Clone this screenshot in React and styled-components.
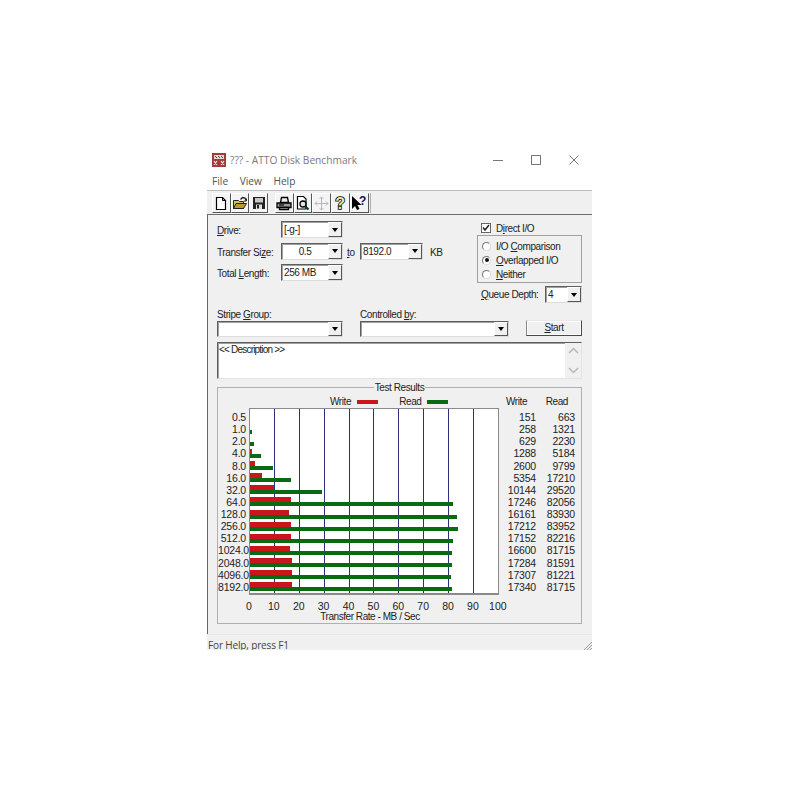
import React from 'react';
import styled, { createGlobalStyle } from 'styled-components';

const GlobalStyle = createGlobalStyle`
	html, body {
		margin: 0;
		padding: 0;
		background: #fff;
	}
	body {
		font-family: "Liberation Sans", Arial, sans-serif;
		font-size: 10px;
		letter-spacing: -0.4px;
		color: #222;
		white-space: nowrap;
	}
`

const Window = styled.div`
	width: 385px;
	margin: 150px 0 0 207px;
`

const TitleBar = styled.div`
	height: 22px;
	box-sizing: border-box;
	padding: 0 0 2px 5px;
	display: flex;
	align-items: center;
	font-family: "Open Sans", sans-serif;
	font-size: 10.2px;
	letter-spacing: 0;
	color: #7a7a7a;
`

const TitleText = styled.span`
	margin-left: 4px;
	flex: 1;
`

const WinControls = styled.div`
	display: flex;
	align-items: center;
	gap: 28px;
	padding-right: 13px;
`

const MenuBar = styled.div`
	height: 18px;
	display: flex;
	align-items: center;
	gap: 11.5px;
	padding-left: 5px;
	font-family: "Open Sans", sans-serif;
	font-size: 10.2px;
	letter-spacing: 0;
	color: #555;
`

const ToolArea = styled.div`
	height: 25px;
	box-sizing: border-box;
	background: #f0f0f0;
	border-top: 1px solid #bdbdbd;
	border-bottom: 1px solid #6c6c6c;
	padding: 1px 0 0 5px;
	display: flex;
`

const ToolGroup = styled.div`
	display: flex;
	height: 20px;
	padding-right: 1px;
	border-right: 1px solid #b0b0b0;
	margin-top: 1px;
`

const ToolButton = styled.div`
	width: 18.7px;
	height: 20px;
	box-sizing: border-box;
	display: flex;
	align-items: center;
	justify-content: center;
	background: #f4f4f4;
	border: 1px solid;
	border-color: #fff #555 #555 #fff;
	margin-left: ${p => (p.$gap ? '7px' : '0')};
`

const Body = styled.div`
	background: #f0f0f0;
	border-left: 1px solid #666;
	padding: 6px 10px 10px 9px;
`

const TopSection = styled.div`
	display: flex;
	height: 83px;
`

const LeftForm = styled.div`
	width: 260px;
	display: flex;
	flex-direction: column;
	gap: 4.5px;
`

const FormRow = styled.div`
	display: flex;
	align-items: center;
	height: 17px;
`

const FieldLabel = styled.span`
	width: 64px;
	flex: none;
	padding-top: 2px;
`

const Combo = styled.div`
	width: ${p => p.$w}px;
	height: ${p => p.$h || 17}px;
	box-sizing: border-box;
	flex: none;
	display: flex;
	background: #fff;
	border: 1px solid;
	border-color: #5e5e5e #dcdcdc #dcdcdc #5e5e5e;
	box-shadow: inset 1px 1px 0 #a0a0a0;
`

const ComboValue = styled.span`
	flex: 1;
	padding: 1px 2px 0;
	line-height: 14px;
	text-align: ${p => (p.$center ? 'center' : 'left')};
`

const ComboArrow = styled.span`
	width: 14px;
	flex: none;
	display: flex;
	align-items: center;
	justify-content: center;
	background: #f0f0f0;
	box-sizing: border-box;
	border: 1px solid;
	border-color: #fff #555 #555 #fff;
	&::after {
		content: "";
		border: 3.5px solid transparent;
		border-top: 4px solid #000;
		border-bottom: 0;
	}
`

const ToText = styled.span`
	margin: 0 5px 0 4px;
	width: 8px;
	padding-top: 2px;
`

const KbText = styled.span`
	margin-left: 7px;
	padding-top: 2px;
`

const RightOptions = styled.div`
	width: 105px;
	display: flex;
	flex-direction: column;
`

const CheckRow = styled.div`
	height: 14px;
	display: flex;
	align-items: center;
	gap: 5px;
	padding-left: 4px;
`

const CheckBox = styled.span`
	width: 10px;
	height: 10px;
	flex: none;
	box-sizing: border-box;
	background: #fff;
	border: 1px solid #666;
	display: flex;
`

const RadioGroup = styled.div`
	height: 48px;
	box-sizing: border-box;
	border: 1px solid #a0a0a0;
	padding: 3px 0 0 4px;
	display: flex;
	flex-direction: column;
`

const RadioRow = styled.div`
	height: 14.4px;
	display: flex;
	align-items: center;
	gap: 5px;
`

const Radio = styled.span`
	width: 9px;
	height: 9px;
	flex: none;
	box-sizing: border-box;
	border-radius: 50%;
	background: #fff;
	border: 1px solid;
	border-color: #777 #ddd #ddd #777;
	display: flex;
	align-items: center;
	justify-content: center;
	&::after {
		content: "";
		width: 4px;
		height: 4px;
		border-radius: 50%;
		background: ${p => (p.$on ? '#111' : 'transparent')};
	}
`

const QueueRow = styled.div`
	margin-top: 3px;
	height: 17px;
	display: flex;
	align-items: center;
	justify-content: space-between;
	padding-left: 4px;
`

const Key = styled.span`
	text-decoration: underline;
	text-underline-offset: 1px;
`

const StripeSection = styled.div`
	display: flex;
	gap: 17px;
	margin-top: 4px;
	align-items: flex-end;
`

const StripeField = styled.div`
	display: flex;
	flex-direction: column;
`

const StripeLabel = styled.span`
	height: 13px;
	line-height: 13px;
`

const StartButton = styled.div`
	width: 56px;
	height: 16px;
	box-sizing: border-box;
	background: #f0f0f0;
	border: 1px solid;
	border-color: #e8e8e8 #4a4a4a #4a4a4a #8a8a8a;
	box-shadow: inset 0 0 0 1px #fff;
	text-align: center;
	line-height: 14px;
	margin-bottom: 1px;
`

const Description = styled.div`
	margin-top: 5px;
	height: 37px;
	box-sizing: border-box;
	display: flex;
	background: #fff;
	border: 1px solid;
	border-color: #5e5e5e #e4e4e4 #e4e4e4 #5e5e5e;
	box-shadow: inset 1px 1px 0 #a0a0a0;
`

const DescText = styled.span`
	flex: 1;
	padding: 1px 0 0 1px;
	letter-spacing: -0.8px;
`

const ScrollBar = styled.div`
	width: 16px;
	background: #f0f0f0;
	display: flex;
	flex-direction: column;
	justify-content: space-between;
	align-items: center;
	padding: 4px 0;
`

const ResultsBox = styled.fieldset`
	margin: 2px 0 0;
	padding: 0;
	height: 243px;
	box-sizing: border-box;
	border: 1px solid #b0b0b0;
	min-width: 0;
`

const ResultsTitle = styled.legend`
	margin: 0 auto;
	padding: 0 1px;
	line-height: 13px;
`

const LegendRow = styled.div`
	height: 14px;
	padding-top: 1px;
	display: flex;
	align-items: center;
	line-height: 14px;
`

const LegendKeys = styled.div`
	display: flex;
	align-items: center;
	width: 288px;
	padding-left: 112px;
	box-sizing: border-box;
`

const Swatch = styled.span`
	width: 21px;
	height: 4px;
	background: ${p => p.$color};
	margin: 0 21px 0 6px;
`

const ValueHead = styled.span`
	width: ${p => p.$w}px;
	text-align: right;
`

const ChartRow = styled.div`
	display: flex;
`

const NumberColumn = styled.div`
	font-size: 10.5px;
	letter-spacing: -0.2px;
	flex: none;
	padding-top: 2px;
	text-align: right;
	width: ${p => p.$w}px;
`

const Cell = styled.div`
	height: 12.14px;
	line-height: 12.14px;
`

const Plot = styled.div`
	width: 248px;
	height: 182px;
	flex: none;
	margin-left: 3px;
	box-sizing: content-box;
	padding-top: 2px;
	background-color: #fff;
	background-image: repeating-linear-gradient(
		to right,
		transparent 0,
		transparent 23.9px,
		#2f2f7f 23.9px,
		#2f2f7f 24.9px
	);
	background-clip: padding-box;
	border: 1px solid #8a8a8a;
	border-bottom-width: 2px;
	margin-top: -1px;
`

const BarRow = styled.div`
	height: 12.14px;
	display: flex;
	flex-direction: column;
	justify-content: center;
`

const Bar = styled.div`
	height: ${p => p.$h}px;
	background: ${p => p.$color};
`

const XAxis = styled.div`
	display: flex;
	margin: 6px 0 0 18.5px;
	font-size: 10.5px;
	letter-spacing: 0;
`

const XTick = styled.span`
	width: 24.9px;
	text-align: center;
	line-height: 11px;
`

const XCaption = styled.div`
	line-height: 10px;
	width: 304px;
	text-align: center;
	letter-spacing: -0.45px;
`

const StatusBar = styled.div`
	height: 16px;
	box-sizing: border-box;
	display: flex;
	align-items: flex-end;
	justify-content: space-between;
	padding: 0 0 0 1px;
	background: #f0f0f0;
	border-top: 1px solid #e6e6e6;
	font-family: "Open Sans", sans-serif;
	font-size: 10px;
	letter-spacing: -0.15px;
	line-height: 10px;
	color: #444;
`

const results = [
	['0.5', 151, 663],
	['1.0', 258, 1321],
	['2.0', 629, 2230],
	['4.0', 1288, 5184],
	['8.0', 2600, 9799],
	['16.0', 5354, 17210],
	['32.0', 10144, 29520],
	['64.0', 17246, 82056],
	['128.0', 16161, 83930],
	['256.0', 17212, 83952],
	['512.0', 17152, 82216],
	['1024.0', 16600, 81715],
	['2048.0', 17284, 81591],
	['4096.0', 17307, 81221],
	['8192.0', 17340, 81715],
];

const ticks = [0, 10, 20, 30, 40, 50, 60, 70, 80, 90, 100];

// kB/s to px, 10 MB/s is one grid cell
const barWidth = value => Math.max(0, Math.floor(value * 0.00249 - 1));

const AppIcon = () => (
	<svg width="14" height="14" viewBox="0 0 14 14">
		<rect width="14" height="14" fill="#a33a3a" />
		<rect x="2" y="2" width="10" height="4" fill="#e8d8d8" />
		<path d="M3 3h1v1H3zM6 3h1v1H6zM9 3h1v1H9zM4 4h1v1H4zM7 4h1v1H7zM10 4h1v1h-1z" fill="#444" />
		<path d="M2 8l3 4M5 8l-3 4M9 8l3 4M12 8l-3 4" stroke="#eee" strokeWidth="1.2" />
	</svg>
);

const IconNew = () => (
	<svg width="14" height="15" viewBox="0 0 14 15">
		<path d="M2.500 1.500h6l3 3v9h-9z" fill="#fff" stroke="#000" strokeWidth="1.200" />
		<path d="M8.500 1.500v3h3" fill="none" stroke="#000" />
	</svg>
);

const IconOpen = () => (
	<svg width="16" height="15" viewBox="0 0 16 15">
		<path d="M1.500 4.500h5l1 1h4v7h-10z" fill="#d8c25a" stroke="#222" />
		<path d="M1.500 12.500l2.500-5h10.500l-3 5z" fill="#b89a34" stroke="#222" />
		<path d="M8.500 3.500l2-2 2.500.5 1 2.500" fill="none" stroke="#222" strokeWidth="1.300" />
		<path d="M14.500 2.500v2.500h-2.500" fill="none" stroke="#222" />
	</svg>
);

const IconSave = () => (
	<svg width="14" height="14" viewBox="0 0 14 14">
		<rect x="1" y="1" width="12" height="12" fill="#222" />
		<rect x="3" y="2" width="8" height="4.500" fill="#c8c8c8" />
		<rect x="4" y="8.500" width="6" height="4.500" fill="#e0e0e0" />
		<rect x="5" y="9" width="2" height="3.500" fill="#222" />
	</svg>
);

const IconPrint = () => (
	<svg width="16" height="15" viewBox="0 0 16 15">
		<path d="M4.500 6.500l1-5h6l1 5z" fill="#eee" stroke="#000" strokeWidth="1.300" />
		<path d="M1 7h14v4.500H1z" fill="#9a9a9a" stroke="#000" strokeWidth="1.300" />
		<path d="M3.500 11.500h9v2h-9z" fill="#eee" stroke="#000" strokeWidth="1.300" />
		<path d="M3 9h5" stroke="#111" strokeWidth="1.300" />
	</svg>
);

const IconPreview = () => (
	<svg width="16" height="16" viewBox="0 0 16 16">
		<path d="M2.500 1.500h6l2.500 2.500v10h-8.500z" fill="#fff" stroke="#000" strokeWidth="1.200" />
		<circle cx="8" cy="9" r="3" fill="#dfe8e8" stroke="#000" strokeWidth="1.300" />
		<path d="M10 11l3.500 3.500" stroke="#063030" strokeWidth="2" />
	</svg>
);

const IconMove = () => (
	<svg width="15" height="15" viewBox="0 0 15 15">
		<path
			d="M7.500 1v13M1 7.500h13M5.500 3l2-2 2 2M5.500 12l2 2 2-2M3 5.500l-2 2 2 2M12 5.500l2 2-2 2"
			fill="none"
			stroke="#b8b8b8"
		/>
	</svg>
);

const IconHelp = () => (
	<svg width="12" height="16" viewBox="0 0 12 16">
		<text
			x="6"
			y="13.500"
			textAnchor="middle"
			fontFamily="Liberation Sans, sans-serif"
			fontWeight="700"
			fontSize="16"
			fill="#f0e6a0"
			stroke="#000"
			strokeWidth="1.600"
			paintOrder="stroke"
		>
			?
		</text>
	</svg>
);

const IconWhatsThis = () => (
	<svg width="16" height="16" viewBox="0 0 16 16">
		<path d="M1 1l0 13 3-3 2 4 2.500-1-2-4h4z" fill="#000" />
		<text
			x="11.500"
			y="10"
			textAnchor="middle"
			fontFamily="Liberation Sans, sans-serif"
			fontWeight="700"
			fontSize="12"
			fill="#12125a"
		>
			?
		</text>
	</svg>
);

const Chevron = ({ up }) => (
	<svg width="11" height="7" viewBox="0 0 11 7">
		<path d={up ? 'M1 6l4.500-4.500L10 6' : 'M1 1l4.500 4.500L10 1'} fill="none" stroke="#b8b8b8" strokeWidth="1.500" />
	</svg>
);

const App = () => {
	return (
		<>
			<GlobalStyle />
			<Window>
				<TitleBar>
					<AppIcon />
					<TitleText>??? - ATTO Disk Benchmark</TitleText>
					<WinControls>
						<svg width="10" height="10" viewBox="0 0 10 10">
							<path d="M0 5.500h10" stroke="#777" />
						</svg>
						<svg width="10" height="10" viewBox="0 0 10 10">
							<rect x=".5" y=".5" width="9" height="9" fill="none" stroke="#777" />
						</svg>
						<svg width="10" height="10" viewBox="0 0 10 10">
							<path d="M.5 .5l9 9M9.500 .5l-9 9" stroke="#777" />
						</svg>
					</WinControls>
				</TitleBar>
				<MenuBar>
					<span>File</span>
					<span>View</span>
					<span>Help</span>
				</MenuBar>
				<ToolArea>
					<ToolGroup>
						<ToolButton><IconNew /></ToolButton>
						<ToolButton><IconOpen /></ToolButton>
						<ToolButton><IconSave /></ToolButton>
						<ToolButton $gap><IconPrint /></ToolButton>
						<ToolButton><IconPreview /></ToolButton>
						<ToolButton><IconMove /></ToolButton>
						<ToolButton><IconHelp /></ToolButton>
						<ToolButton><IconWhatsThis /></ToolButton>
					</ToolGroup>
				</ToolArea>
				<Body>
					<TopSection>
						<LeftForm>
							<FormRow>
								<FieldLabel><Key>D</Key>rive:</FieldLabel>
								<Combo $w={62}>
									<ComboValue>[-g-]</ComboValue>
									<ComboArrow />
								</Combo>
							</FormRow>
							<FormRow>
								<FieldLabel>Transfer Si<Key>z</Key>e:</FieldLabel>
								<Combo $w={62}>
									<ComboValue $center>0.5</ComboValue>
									<ComboArrow />
								</Combo>
								<ToText><Key>t</Key>o</ToText>
								<Combo $w={63}>
									<ComboValue>8192.0</ComboValue>
									<ComboArrow />
								</Combo>
								<KbText>KB</KbText>
							</FormRow>
							<FormRow>
								<FieldLabel>Total <Key>L</Key>ength:</FieldLabel>
								<Combo $w={62}>
									<ComboValue>256 MB</ComboValue>
									<ComboArrow />
								</Combo>
							</FormRow>
						</LeftForm>
						<RightOptions>
							<CheckRow>
								<CheckBox>
									<svg width="8" height="8" viewBox="0 0 8 8">
										<path d="M1 3.500l2 2.500 4-5" fill="none" stroke="#222" strokeWidth="1.500" />
									</svg>
								</CheckBox>
								<span>D<Key>i</Key>rect I/O</span>
							</CheckRow>
							<RadioGroup>
								<RadioRow>
									<Radio />
									<span>I/O <Key>C</Key>omparison</span>
								</RadioRow>
								<RadioRow>
									<Radio $on />
									<span><Key>O</Key>verlapped I/O</span>
								</RadioRow>
								<RadioRow>
									<Radio />
									<span><Key>N</Key>either</span>
								</RadioRow>
							</RadioGroup>
							<QueueRow>
								<span><Key>Q</Key>ueue Depth:</span>
								<Combo $w={37}>
									<ComboValue>4</ComboValue>
									<ComboArrow />
								</Combo>
							</QueueRow>
						</RightOptions>
					</TopSection>
					<StripeSection>
						<StripeField>
							<StripeLabel>Stripe <Key>G</Key>roup:</StripeLabel>
							<Combo $w={126} $h={16}>
								<ComboValue />
								<ComboArrow />
							</Combo>
						</StripeField>
						<StripeField>
							<StripeLabel>Controlled <Key>b</Key>y:</StripeLabel>
							<Combo $w={149} $h={16}>
								<ComboValue />
								<ComboArrow />
							</Combo>
						</StripeField>
						<StartButton><Key>S</Key>tart</StartButton>
					</StripeSection>
					<Description>
						<DescText>&lt;&lt; Description &gt;&gt;</DescText>
						<ScrollBar>
							<Chevron up />
							<Chevron />
						</ScrollBar>
					</Description>
					<ResultsBox>
						<ResultsTitle>Test Results</ResultsTitle>
						<LegendRow>
							<LegendKeys>
								<span>Write</span>
								<Swatch $color="#c8161a" />
								<span>Read</span>
								<Swatch $color="#0a6a14" />
							</LegendKeys>
							<ValueHead $w={21}>Write</ValueHead>
							<ValueHead $w={41}>Read</ValueHead>
						</LegendRow>
						<ChartRow>
							<NumberColumn $w={28}>
								{results.map(([size]) => <Cell key={size}>{size}</Cell>)}
							</NumberColumn>
							<Plot>
								{results.map(([size, write, read]) => (
									<BarRow key={size}>
										<Bar $h={5} $color="#c8161a" style={{ width: barWidth(write) }} />
										<Bar $h={4} $color="#0a6a14" style={{ width: barWidth(read) }} />
									</BarRow>
								))}
							</Plot>
							<NumberColumn $w={37}>
								{results.map(([size, write]) => <Cell key={size}>{write}</Cell>)}
							</NumberColumn>
							<NumberColumn $w={39}>
								{results.map(([size, , read]) => <Cell key={size}>{read}</Cell>)}
							</NumberColumn>
						</ChartRow>
						<XAxis>
							{ticks.map(t => <XTick key={t}>{t}</XTick>)}
						</XAxis>
						<XCaption>Transfer Rate - MB / Sec</XCaption>
					</ResultsBox>
				</Body>
				<StatusBar>
					<span>For Help, press F1</span>
					<svg width="9" height="9" viewBox="0 0 9 9">
						<path d="M1 9l8-8M4 9l5-5M7 9l2-2" stroke="#999" />
					</svg>
				</StatusBar>
			</Window>
		</>
	);
}

export default App;
